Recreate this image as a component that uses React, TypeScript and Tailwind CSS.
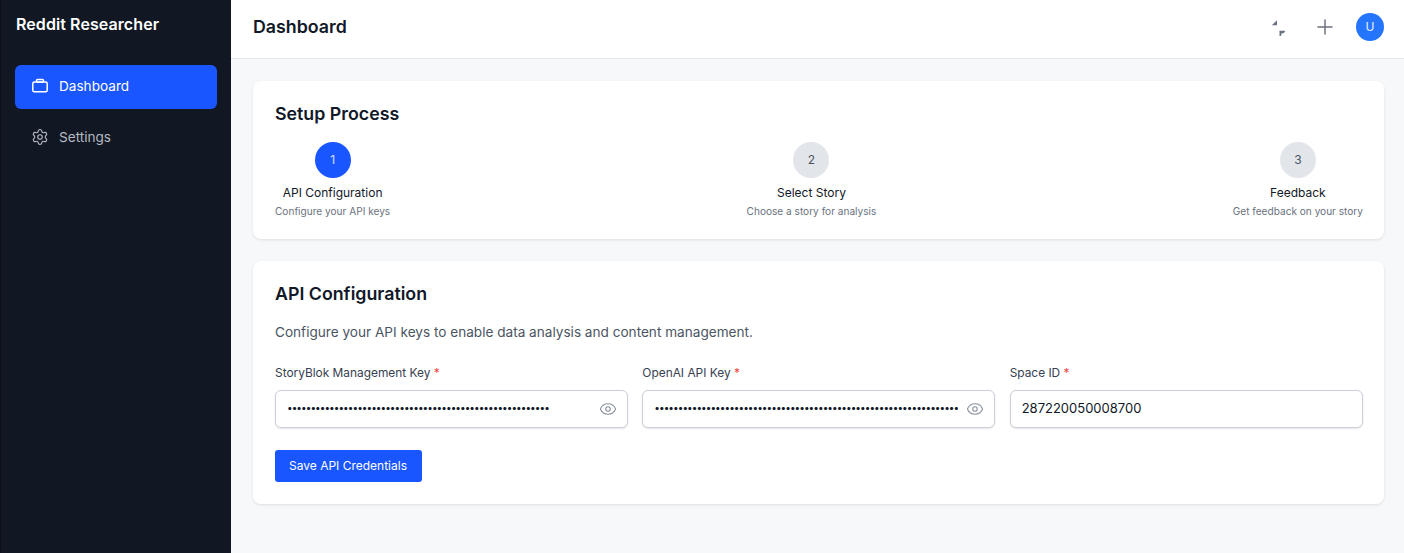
import { Settings, Plus, Eye } from "lucide-react";

const steps = [
  { n: "1", title: "API Configuration", sub: "Configure your API keys", active: true },
  { n: "2", title: "Select Story", sub: "Choose a story for analysis", active: false },
  { n: "3", title: "Feedback", sub: "Get feedback on your story", active: false },
];

function Field({ label, value, secret }: { label: string; value: string; secret?: boolean }) {
  return (
    <div className="flex flex-col">
      <label className="text-[11.9px] leading-[18px] mb-[8px] text-[#374151]">
        {label} <span className="text-[#ef4444]">*</span>
      </label>
      <div className="relative">
        <input
          readOnly
          type={secret ? "password" : "text"}
          value={value}
          className={`block w-full h-[38px] rounded-[6px] border border-[#cbd0d8] bg-white pl-[11px] text-[#111827] shadow-[0_1px_2px_rgba(0,0,0,0.1)] outline-none ${secret ? "pr-[36px] pb-[4px] text-[10px] tracking-[-0.95px]" : "pr-[11px] pb-[2px] text-[13px]"}`}
        />
        {secret && (
          <Eye className="absolute right-[11px] top-[10px] w-[18px] h-[18px] text-[#8b93a1]" strokeWidth={1.5} />
        )}
      </div>
    </div>
  );
}

export default function App() {
  return (
    <div className="flex h-[553px] w-[1404px] overflow-hidden bg-[#f7f8fa] font-['Inter',sans-serif] text-[#111827]">
      <aside className="w-[231px] shrink-0 bg-[#111823] border-l border-[#0b0f17] flex flex-col">
        <div className="pl-[15px] pt-[14px] h-[65px] text-[16px] tracking-[0.08px] leading-[20px] font-semibold text-white">Reddit Researcher</div>
        <nav className="px-[14px] flex flex-col gap-[7px]">
          <div className="h-[44px] rounded-[6px] bg-[#1a56ff] flex items-center pl-[17px] pb-[2px] gap-[11px] text-white text-[13.6px]">
            <svg className="w-[16px] h-[16px]" viewBox="0 0 16 16" fill="none" stroke="currentColor" strokeWidth="1.5" strokeLinejoin="round" strokeLinecap="round">
              <rect x="0.8" y="4" width="14.4" height="9.8" rx="1.5" />
              <rect x="4.5" y="1.6" width="7" height="2.6" rx="1" />
            </svg>
            Dashboard
          </div>
          <div className="h-[44px] rounded-[6px] flex items-center pl-[16px] pb-[2px] gap-[10px] text-[#b4b9c2] text-[13.6px]">
            <Settings className="w-[18px] h-[18px]" strokeWidth={1.5} />
            Settings
          </div>
        </nav>
      </aside>
      <div className="flex-1 flex flex-col min-w-0">
        <header className="h-[59px] shrink-0 bg-white border-b border-[#e5e7eb] flex items-center pl-[22px] pr-[20px] pb-[4px]">
          <h1 className="text-[17.8px] font-semibold text-[#111827] flex-1">Dashboard</h1>
          <svg className="w-[16px] h-[19px] mr-[27px] text-[#6b7280]" viewBox="0 0 16 19" fill="currentColor">
            <path d="M7 2.3V7.3H1.8Z" />
            <path d="M9.5 12.8H15.3L14 15L11.5 15.5L11 18H9.5Z" />
          </svg>
          <Plus className="w-[24px] h-[24px] mr-[19px] text-[#6b7280]" strokeWidth={1.5} />
          <div className="w-[28px] h-[28px] rounded-full bg-[#2575fc] text-white/90 text-[12px] flex items-center justify-center">U</div>
        </header>
        <main className="flex-1 pl-[22px] pr-[20px] pt-[22px] flex flex-col gap-[22px]">
          <section className="bg-white rounded-[8px] h-[158px] pl-[22px] pr-[21px] pt-[22px] shadow-[0_1px_3px_rgba(0,0,0,0.1)]">
            <h2 className="text-[17.8px] leading-[22px] font-semibold mb-[17px]">Setup Process</h2>
            <div className="flex justify-between">
              {steps.map((s) => (
                <div key={s.n} className="flex flex-col items-center">
                  <div className={`w-[36px] h-[36px] rounded-full flex items-center justify-center text-[12px] ${s.active ? "bg-[#1a56ff] text-white/80" : "bg-[#e2e5ea] text-[#4b5563]"}`}>{s.n}</div>
                  <div className="mt-[6px] text-[12px] leading-[18px] text-[#111827]">{s.title}</div>
                  <div className="mt-[1px] text-[10.1px] leading-[16px] text-[#6b7280]">{s.sub}</div>
                </div>
              ))}
            </div>
          </section>
          <section className="bg-white rounded-[8px] h-[243px] pl-[22px] pr-[21.5px] pt-[22px] shadow-[0_1px_3px_rgba(0,0,0,0.1)]">
            <h2 className="text-[17.8px] leading-[22px] font-semibold mb-[16px]">API Configuration</h2>
            <p className="text-[13.6px] leading-[22px] text-[#4b5563] mb-[21px]">Configure your API keys to enable data analysis and content management.</p>
            <div className="grid grid-cols-3 gap-[14.5px]">
              <Field label="StoryBlok Management Key" value={"x".repeat(56)} secret />
              <Field label="OpenAI API Key" value={"x".repeat(80)} secret />
              <Field label="Space ID" value="287220050008700" />
            </div>
            <button className="mt-[22px] h-[32px] pl-[14px] pr-[15px] pb-[1px] rounded-[3px] bg-[#1a56ff] text-white text-[12px]">Save API Credentials</button>
          </section>
        </main>
      </div>
    </div>
  );
}
